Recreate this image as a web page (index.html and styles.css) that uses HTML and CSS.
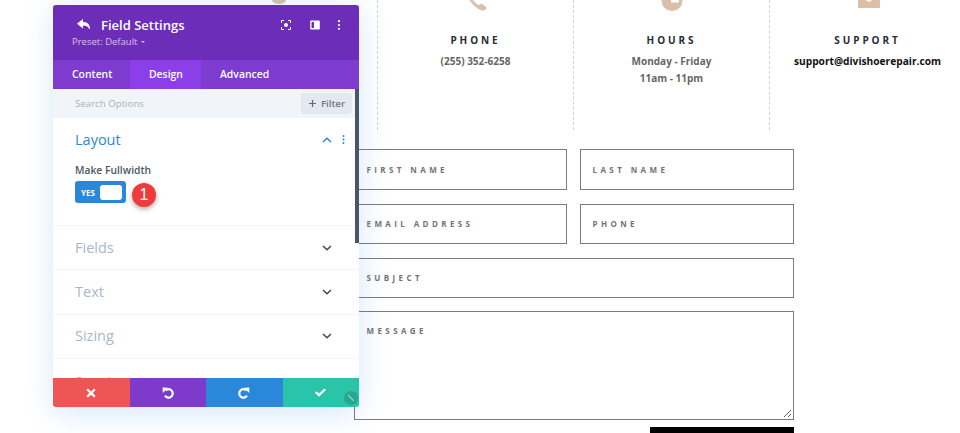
FILE: index.html
```html
<!DOCTYPE html>
<html lang="en">
<head>
<meta charset="utf-8">
<title>Field Settings</title>
<link rel="stylesheet" href="styles.css">
</head>
<body>
<div class="page">
  <section class="contact">
    <div class="info">
      <div class="icon"><svg width="20" height="33" viewBox="0 0 20 33"><ellipse class="tan" cx="10" cy="0" rx="7" ry="4"/></svg></div>
    </div>
    <div class="info dashed">
      <div class="icon"><svg width="24" height="33" viewBox="0 0 24 33"><path class="tan-line" d="M5-4C7 1 11 5 15 7.500"/><path class="tan" d="M14 6l3-2.500 4.500 2.800c1 .7 1.200 1.800.5 2.700l-1 1c-.9.800-2.500.8-4 .2l-3.500-2z"/></svg></div>
      <h3>PHONE</h3>
      <p>(255) 352-6258</p>
    </div>
    <div class="info dashed">
      <div class="icon"><svg width="24" height="33" viewBox="0 0 24 33"><circle class="tan" cx="12" cy="0.500" r="10.500"/><rect class="cut" x="11" y="-5" width="8" height="7.500"/></svg></div>
      <h3>HOURS</h3>
      <p>Monday - Friday<br>11am - 11pm</p>
    </div>
    <div class="info dashed">
      <div class="icon"><svg width="24" height="33" viewBox="0 0 24 33"><rect class="tan" x="2" y="-10" width="22" height="18" rx="1"/><path class="cut" d="M8-5h10v4l-5 3-5-3z"/></svg></div>
      <h3>SUPPORT</h3>
      <p class="email">support@divishoerepair.com</p>
    </div>
  </section>

  <form class="form">
    <div class="row tall">
      <div class="field">FIRST NAME</div>
      <div class="field">LAST NAME</div>
    </div>
    <div class="row">
      <div class="field">EMAIL ADDRESS</div>
      <div class="field">PHONE</div>
    </div>
    <div class="field">SUBJECT</div>
    <div class="field message">MESSAGE
      <svg class="grip" width="9" height="9" viewBox="0 0 9 9"><path d="M1 8l7-7M5 8l3-3" /></svg>
    </div>
    <div class="submit"></div>
  </form>

  <aside class="panel">
    <header class="panel-head">
      <div class="title-row">
        <svg class="back" width="14" height="12" viewBox="0 0 14 12"><path d="M6 0L0 4.800 6 9.500V6.600c3 0 5 .8 6.200 3.400h.8C13 5.500 10.500 3 6 3z"/></svg>
        <h2>Field Settings</h2>
        <div class="head-icons">
          <svg class="focus" width="10" height="10" viewBox="0 0 10 10"><path class="corner" d="M.5 3V.5H3M7 .5h2.500V3M9.500 7v2.500H7M3 9.500H.5V7"/><circle class="dot" cx="5" cy="5" r="2"/></svg>
          <svg width="10" height="10" viewBox="0 0 10 10"><path class="dot" fill-rule="evenodd" d="M1 .5h8a.8.8 0 0 1 .8.8v7.400a.8.8 0 0 1-.8.8H1a.8.8 0 0 1-.8-.8V1.300A.8.8 0 0 1 1 .5zM1.500 2v6h2.500V2z"/></svg>
          <svg width="4" height="10" viewBox="0 0 4 10"><circle class="dot" cx="2" cy="1.200" r="1.100"/><circle class="dot" cx="2" cy="5" r="1.100"/><circle class="dot" cx="2" cy="8.800" r="1.100"/></svg>
        </div>
      </div>
      <div class="preset">Preset: Default <span class="caret"></span></div>
    </header>
    <nav class="tabs">
      <div class="tab">Content</div>
      <div class="tab active">Design</div>
      <div class="tab">Advanced</div>
    </nav>
    <div class="search">
      <span>Search Options</span>
      <div class="filter"><svg width="9" height="9" viewBox="0 0 9 9"><path d="M4.500 1v7M1 4.500h7"/></svg>Filter</div>
    </div>
    <div class="sections">
      <section class="group open">
        <div class="group-head">
          <h4>Layout</h4>
          <svg class="chev up" width="10" height="6" viewBox="0 0 10 6"><path d="M1 5l4-3.800L9 5"/></svg>
          <svg class="kebab" width="3" height="9" viewBox="0 0 3 9"><circle cx="1.500" cy="1" r="1"/><circle cx="1.500" cy="4.500" r="1"/><circle cx="1.500" cy="8" r="1"/></svg>
        </div>
        <label class="opt">Make Fullwidth</label>
        <div class="toggle-line">
          <div class="toggle"><span>YES</span><i></i></div>
          <div class="badge">1</div>
        </div>
      </section>
      <section class="group">
        <div class="group-head"><h4>Fields</h4><svg class="chev" width="10" height="6" viewBox="0 0 10 6"><path d="M1 1l4 3.800L9 1"/></svg></div>
      </section>
      <section class="group">
        <div class="group-head"><h4>Text</h4><svg class="chev" width="10" height="6" viewBox="0 0 10 6"><path d="M1 1l4 3.800L9 1"/></svg></div>
      </section>
      <section class="group">
        <div class="group-head"><h4>Sizing</h4><svg class="chev" width="10" height="6" viewBox="0 0 10 6"><path d="M1 1l4 3.800L9 1"/></svg></div>
      </section>
      <section class="group last">
        <div class="group-head"><h4>Spacing</h4></div>
      </section>
    </div>
    <div class="scrollbar"></div>
    <footer class="actions">
      <div class="act red"><svg width="10" height="10" viewBox="0 0 10 10"><path class="fill" d="M2 .5L5 3.400 8 .5 9.600 2 6.700 5l2.900 3L8 9.600 5 6.700 2 9.600.4 8l2.900-3L.4 2z"/></svg></div>
      <div class="act purple"><svg width="12" height="12" viewBox="0 0 12 12"><path class="stroke" d="M3.500 3.500A4.200 4.200 0 1 1 3 8.700"/><path class="fill" d="M.6.500L6 .8.800 6z"/></svg></div>
      <div class="act blue"><svg width="12" height="12" viewBox="0 0 12 12"><path class="stroke" d="M8.500 3.500A4.200 4.200 0 1 0 9 8.700"/><path class="fill" d="M11.400.500L6 .8 11.200 6z"/></svg></div>
      <div class="act green"><svg width="11" height="9" viewBox="0 0 11 9"><path class="fill" d="M1.600 3.200L4 5.600 9.400.4 11 2 4 8.800 0 4.800z"/></svg></div>
    </footer>
    <div class="resize"><svg width="8" height="8" viewBox="0 0 8 8"><path d="M1 1l6 6"/></svg></div>
  </aside>
</div>
</body>
</html>
```

FILE: styles.css
```css
* { box-sizing: border-box; }

html, body {
  margin: 0;
  padding: 0;
  background: #fff;
}

body {
  font-family: "Open Sans", "Liberation Sans", sans-serif;
}

.page {
  position: relative;
  width: 960px;
  height: 433px;
  overflow: hidden;
  background: #fff;
}

/* contact strip */
.contact {
  display: grid;
  grid-template-columns: repeat(4, 196px);
  margin-left: 181px;
  height: 130px;
}

.info {
  text-align: center;
}

.dashed {
  border-left: 1px dashed #d4d4d4;
}

.icon {
  height: 33px;
  display: flex;
  justify-content: center;
}

.tan { fill: #dcbfa9; }
.cut { fill: #fff; }
.tan-line { fill: none; stroke: #dcbfa9; stroke-width: 3; }

.info h3 {
  margin: 0;
  font-size: 10px;
  line-height: 14px;
  font-weight: 700;
  letter-spacing: 2.900px;
  color: #2b2b33;
}

.info p {
  margin: 6px 0 0;
  font-size: 10px;
  line-height: 16.500px;
  font-weight: 700;
  color: #666;
}

.info p.email {
  font-size: 10.200px;
  color: #111;
}

/* form */
.form {
  display: flex;
  flex-direction: column;
  gap: 14px;
  width: 440px;
  margin: 19px 0 0 354px;
}

.row {
  display: grid;
  grid-template-columns: 213px 214px;
  gap: 13px;
}

.row.tall .field {
  height: 41px;
  padding-top: 14px;
}

.field {
  position: relative;
  height: 40px;
  padding: 13px 11.500px 0;
  border: 1px solid #7b7b7b;
  font-size: 8px;
  line-height: 12px;
  font-weight: 700;
  letter-spacing: 3.400px;
  color: #737373;
  background: #fff;
}

.message {
  height: 109px;
  margin-top: -1px;
}

.grip {
  position: absolute;
  right: 1px;
  bottom: 1px;
  fill: none;
  stroke: #666;
  stroke-width: 1;
}

.submit {
  align-self: flex-end;
  width: 144px;
  height: 30px;
  margin-top: -7px;
  background: #000;
}

/* settings panel */
.panel {
  position: absolute;
  left: 53px;
  top: 5px;
  width: 306px;
  height: 402px;
  display: flex;
  flex-direction: column;
  background: #fff;
  border-radius: 3px;
  box-shadow: 0 5px 30px rgba(43, 135, 218, 0.2);
  overflow: visible;
}

.panel-head {
  height: 55px;
  padding: 11px 19px 0;
  background: #6c2eb9;
  border-radius: 3px 3px 0 0;
  color: #fff;
}

.title-row {
  display: flex;
  align-items: center;
  height: 18px;
}

.back {
  margin: 0 10px 0 5px;
  fill: #fff;
  flex: none;
}

.title-row h2 {
  margin: 0;
  font-size: 13px;
  line-height: 18px;
  font-weight: 600;
}

.head-icons {
  display: flex;
  align-items: center;
  gap: 17px;
  margin-left: auto;
  margin-right: -1px;
}

.focus {
  margin-right: 2px;
}

.corner { fill: none; stroke: #fff; stroke-width: 1; }
.dot { fill: #fff; }

.preset {
  margin-top: 1px;
  font-size: 9.500px;
  line-height: 14px;
  color: #d5c0ec;
}

.caret {
  display: inline-block;
  width: 0;
  height: 0;
  margin-left: 1px;
  vertical-align: 2px;
  border-left: 2px solid transparent;
  border-right: 2px solid transparent;
  border-top: 2.500px solid #d5c0ec;
}

.tabs {
  display: flex;
  height: 29px;
  background: #7d3bcf;
}

.tab {
  padding: 0 19px;
  font-size: 10.400px;
  line-height: 28px;
  font-weight: 600;
  color: #fff;
}

.tab:first-child {
  width: 77px;
}

.tab.active {
  width: 71px;
  background: #8c3fe8;
}

.search {
  display: flex;
  align-items: center;
  justify-content: space-between;
  height: 29px;
  padding: 0 7px 1px 22px;
  background: #f1f5f9;
  font-size: 9.700px;
  color: #a3b3c5;
}

.filter {
  display: flex;
  align-items: center;
  justify-content: center;
  gap: 4px;
  width: 51px;
  height: 21px;
  border-radius: 3px;
  background: #e3e9ef;
  font-size: 9.700px;
  font-weight: 600;
  color: #6b7b8d;
}

.filter svg {
  fill: none;
  stroke: #5c6b7b;
  stroke-width: 1.200;
}

.sections {
  flex: 1;
  min-height: 0;
  overflow: hidden;
}

.group {
  height: 44.300px;
  padding: 0 22px;
  border-bottom: 1px solid #f3f6fa;
}

.group.open {
  height: 108px;
}

.group.last {
  padding-top: 2px;
}

.group-head {
  display: flex;
  align-items: center;
  height: 43px;
}

.group-head h4 {
  margin: 0;
  font-size: 14.500px;
  line-height: 20px;
  font-weight: 400;
  color: #a8b7c9;
}

.open .group-head h4 {
  color: #2b87da;
}

.chev {
  margin-left: auto;
  margin-right: 5px;
  fill: none;
  stroke: #3c4858;
  stroke-width: 1.500;
}

.chev.up {
  stroke: #2b87da;
  margin-right: 0;
}

.kebab {
  margin-left: 9.500px;
  margin-right: -7.500px;
  fill: #2b87da;
}

.opt {
  display: block;
  margin-top: 1px;
  font-size: 10.300px;
  line-height: 16px;
  font-weight: 600;
  color: #4c5866;
}

.toggle-line {
  display: flex;
  align-items: flex-start;
  gap: 6px;
  margin-top: 3px;
}

.toggle {
  display: flex;
  align-items: center;
  justify-content: space-between;
  width: 51px;
  height: 22px;
  padding: 0 4px 0 6px;
  border-radius: 3px;
  background: #2b87da;
}

.toggle span {
  font-size: 8px;
  font-weight: 700;
  color: #fff;
}

.toggle i {
  display: block;
  width: 22px;
  height: 15px;
  border-radius: 3px;
  background: #fff;
}

.badge {
  width: 24px;
  height: 24px;
  margin-top: 2px;
  border-radius: 50%;
  background: #ef3b3b;
  box-shadow: 0 2px 5px rgba(0, 0, 0, 0.35);
  font-family: "Liberation Sans", sans-serif;
  font-size: 16px;
  line-height: 24px;
  text-align: center;
  color: #fff;
}

.scrollbar {
  position: absolute;
  left: 302px;
  top: 84px;
  width: 4px;
  height: 154px;
  background: #4a5568;
}

.actions {
  display: grid;
  grid-template-columns: repeat(4, 1fr);
  height: 29px;
  flex: none;
}

.act {
  display: flex;
  align-items: center;
  justify-content: center;
}

.red { background: #ef5555; border-radius: 0 0 0 3px; }
.purple { background: #7d3acb; }
.blue { background: #2b87da; }
.green { background: #29c4a9; border-radius: 0 0 3px 0; }

.fill { fill: #fff; }
.stroke { fill: none; stroke: #fff; stroke-width: 2.200; }

.resize {
  position: absolute;
  left: 291px;
  top: 386px;
  display: flex;
  align-items: center;
  justify-content: center;
  width: 14px;
  height: 14px;
  border-radius: 50%;
  background: #2aa68f;
}

.resize svg {
  fill: none;
  stroke: #7fd8c6;
  stroke-width: 1.200;
}
```
